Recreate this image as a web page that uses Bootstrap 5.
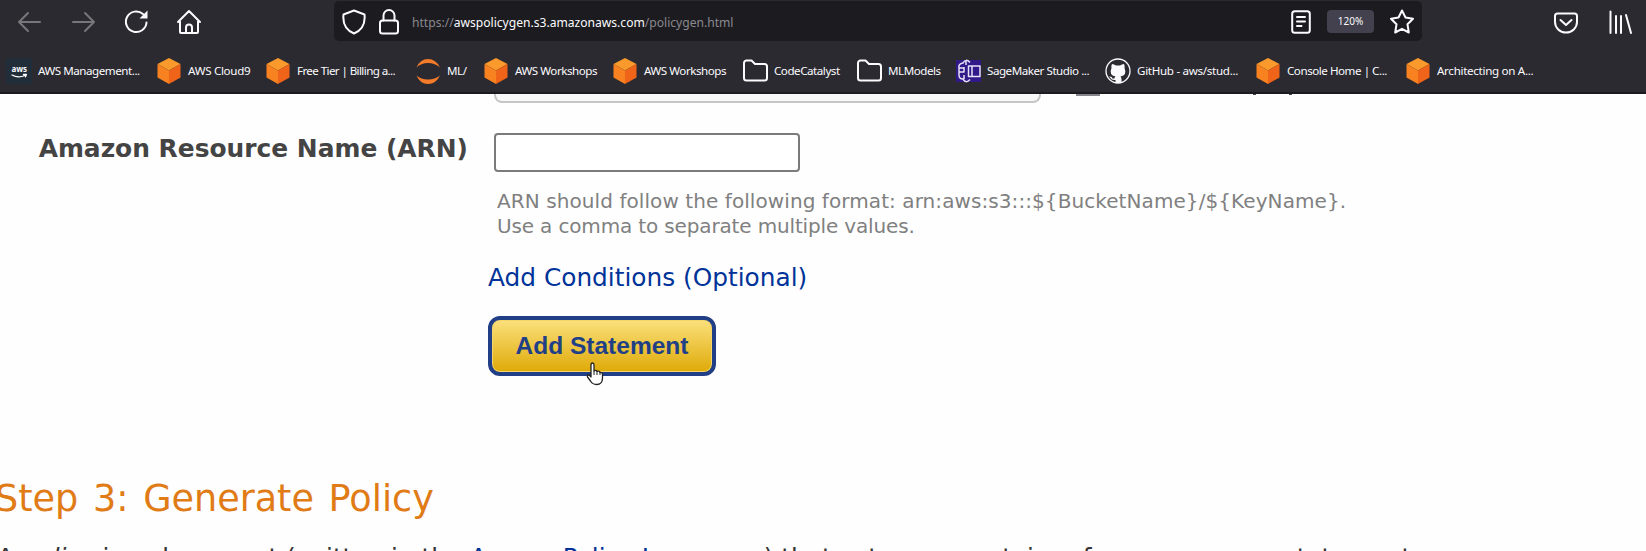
<!DOCTYPE html>
<html lang="en">
<head>
<meta charset="utf-8">
<meta name="viewport" content="width=device-width, initial-scale=1">
<title>AWS Policy Generator</title>
<link rel="stylesheet" href="https://cdn.jsdelivr.net/npm/bootstrap@5.3.0/dist/css/bootstrap.min.css">
<style>
body{height:551px;overflow:hidden;background:#fefefe;color:#444;font-family:"DejaVu Sans",Verdana,sans-serif}
svg{display:block;flex:none}
.chrome{height:94px;background:#2b2a31;border-bottom:2px solid #1b1b20;font-family:"Noto Sans","Segoe UI",sans-serif;color:#fbfbfe}
.toolbar{display:grid;grid-template-columns:334px 1088px 1fr;height:42px}
.line-icon{fill:none;stroke:#fbfbfe;stroke-width:2;stroke-linecap:round;stroke-linejoin:round}
.nav-icons{padding-left:17px;gap:27px;padding-top:1px}
.muted-icon{stroke:#77767b}
.urlbar{background:#1c1b20;border-radius:5px;height:40px;margin-top:1px;padding:1px 8px 0 8px}
.lock{margin-left:11px}
.url{font-size:12.1px;color:#8a898f;white-space:pre;margin-left:11px;padding-top:4px}
.url b{font-weight:400;color:#fbfbfe}
.zoomlvl{width:47px;height:23px;background:#42414d;border-radius:4px;font-size:10px}
.bookmarks{display:grid;grid-template-columns:150px 109px 150px 68px 129px 130px 114px 99px 150px 150px 150px 150px;padding-left:5.500px;height:50px;align-items:center;font-size:11.6px;letter-spacing:-.46px}
.bm{display:flex;align-items:center;gap:6.500px;white-space:nowrap;padding-top:8px;height:50px}
.bm svg{width:26px;height:26px}
.tight{letter-spacing:-.6px}
.wide{letter-spacing:-.3px}
.page{height:457px;overflow:hidden;position:relative}
.prev-row{height:10px;padding-left:494px}
.prev-select{width:547px;height:9px;border:2px solid #c6c6c6;border-top:0;border-radius:0 0 8px 8px;background:#f8f8f8}
.prev-check{width:24px;height:2px;margin-left:35px;background:#85848c}
.prev-text{margin-left:153px;gap:33px}
.prev-text i{width:3px;height:1px;background:#444}
.form-grid{display:grid;grid-template-columns:494px 1fr;margin-top:29px}
.field-name{font-weight:700;font-size:24.9px;line-height:32px;text-align:right;padding-right:26px;white-space:nowrap}
.arn{width:306px;height:39px;border:2px solid #7b7b7b;border-radius:4px;background:#fff;padding:0}
.hint{font-size:20px;line-height:25px;color:#808080;margin:17px 0 0 3px;white-space:nowrap;letter-spacing:.08px}
.hint-end{letter-spacing:-.15px}
.cond{font-size:24.8px;line-height:32px;color:#039;text-decoration:none;margin:23px 0 0 -6px;white-space:nowrap}
.add{width:228px;height:60px;margin:22px 0 0 -6px;border:4px solid #203f87;border-radius:12px;background:linear-gradient(#fbe07c,#dfaa08);color:#203f87;font:700 24.500px "Liberation Sans",Arial,sans-serif;padding:0 0 1px;box-shadow:inset 0 0 0 1px #f5d469}
.step{font-size:36.6px;word-spacing:3px;line-height:44px;color:#e07b16;margin:101px 0 0 -5px;font-weight:400;white-space:nowrap}
.para{font-size:24.75px;line-height:32px;color:#333;margin:21px 0 0 -3px;white-space:nowrap}
.para a{color:#039;text-decoration:none}
.pointer{position:absolute;left:586px;top:268px}
</style>
</head>
<body>
<svg width="0" height="0" class="position-absolute">
<defs>
<symbol id="cube" viewBox="0 0 26 26"><path fill="#fa9a2c" d="M13 0 24.500 6 13 12.500 1.500 6z"/><path fill="#f98220" d="M1.500 6 13 12.500V26L1.500 19.500z"/><path fill="#ef6418" d="M24.500 6 13 12.500V26l11.500-6.500z"/></symbol>
<symbol id="folder" viewBox="0 0 26 26"><path class="line-icon" d="M2 20V5a2.500 2.500 0 0 1 2.500-2.500h5L13 6h9.500A2.500 2.500 0 0 1 25 8.500V20a2.500 2.500 0 0 1-2.500 2.500h-18A2.500 2.500 0 0 1 2 20z"/></symbol>
</defs>
</svg>
<header class="chrome">
<div class="toolbar">
<div class="nav-icons d-flex align-items-center">
<svg class="line-icon muted-icon" width="26" height="26" viewBox="0 0 26 26"><path d="M23 13H2m9-9-9 9 9 9"/></svg>
<svg class="line-icon muted-icon" width="26" height="26" viewBox="0 0 26 26"><path d="M3 13h21m-9-9 9 9-9 9"/></svg>
<svg class="line-icon" width="26" height="26" viewBox="0 0 26 26"><path d="M23.500 13.500A10.300 10.300 0 1 1 20 5"/><path fill="#fbfbfe" stroke="none" d="M24.500 1.500v8h-8z"/></svg>
<svg class="line-icon" width="26" height="26" viewBox="0 0 26 26"><path d="M2 13 13 2l11 11M4 12v11q0 1 1 1h16q1 0 1-1V12M10 24v-5.500a3 3 0 0 1 6 0V24"/></svg>
</div>
<div class="urlbar d-flex align-items-center">
<svg class="line-icon" width="24" height="26" viewBox="0 0 24 26"><path d="M12 1.500 22.500 5.500q1.500 14-10.500 19Q0 19.500 1.500 5.500z"/></svg>
<svg class="line-icon lock" width="24" height="26" viewBox="0 0 24 26"><rect x="3" y="11.500" width="18" height="13" rx="2.500"/><path d="M6.500 11.500V6.500a5.500 5.500 0 0 1 11 0v5"/></svg>
<span class="url">https://<b>awspolicygen.s3.amazonaws.com</b>/policygen.html</span>
<svg class="line-icon ms-auto" width="20" height="24" viewBox="0 0 20 24"><rect x="1.200" y="1.200" width="17.600" height="21.600" rx="2.500"/><path d="M6 7h8M6 11.500h8M6 16h4.500"/></svg>
<span class="zoomlvl d-flex align-items-center justify-content-center ms-3 me-3">120%</span>
<svg class="line-icon" width="24" height="26" viewBox="1 0 24 26"><path d="m13 1.500 3.500 7 7.500 1.200-5.500 5.600 1.300 8.200-6.800-3.700-6.800 3.700 1.300-8.200L2 9.700l7.500-1.200z"/></svg>
</div>
<div class="d-flex align-items-center justify-content-end pt-1">
<svg class="line-icon" width="24" height="24" viewBox="0 0 24 24"><path d="M3.500 2.500h17Q23 2.500 23 5v6a11 10.500 0 0 1-22 0V5q0-2.500 2.500-2.500z"/><path d="m6.500 9 5.500 5 5.500-5"/></svg>
<svg class="line-icon ms-4 me-2 pe-1" width="36" height="26" viewBox="0 0 32 26"><path d="M5.500 1.500V23M11 6V23M16 6V23M21 5 26 23" transform="translate(3 0)"/></svg>
</div>
</div>
<nav class="bookmarks">
<span class="bm"><svg viewBox="0 0 26 26"><rect width="26" height="26" rx="2" fill="#222d3a"/><text x="5.500" y="14" font-size="8" font-weight="700" fill="#fbfbfe" textLength="15">aws</text><path class="line-icon" style="stroke-width:1.300" d="M6 17q6 3.500 13 .500M17.500 16.500l3-.200-1 2.500"/></svg><span>AWS Management...</span></span>
<span class="bm wide"><svg><use href="#cube"/></svg><span>AWS Cloud9</span></span>
<span class="bm tight"><svg><use href="#cube"/></svg><span>Free Tier | Billing a...</span></span>
<span class="bm"><svg viewBox="0 0 26 26"><path fill="#f47b2a" d="M1.500 9.500Q5 1 13 1t12 8.500Q20 5 13 5T1.500 9.500zM1.500 17.500Q6 21.500 13 21.500T25 17.500Q21 26 13 26T1.500 17.500z"/></svg><span>ML/</span></span>
<span class="bm"><svg><use href="#cube"/></svg><span>AWS Workshops</span></span>
<span class="bm"><svg><use href="#cube"/></svg><span>AWS Workshops</span></span>
<span class="bm"><svg><use href="#folder"/></svg><span>CodeCatalyst</span></span>
<span class="bm"><svg><use href="#folder"/></svg><span>MLModels</span></span>
<span class="bm"><svg viewBox="0 0 26 26"><rect x="1" y="2" width="25" height="22" fill="#31198a"/><g fill="none" stroke="#e4e0f5" stroke-width="1.500" stroke-linejoin="round"><path d="M15 4.500Q11 0 8 5 3 6 4 10v7q0 4 4 4 3 5 7 .500M4 10h5M4 14h5V9M9 17v4M11 2v5"/><path d="M13.500 8H25v10.500H13.500zM17 8v10.500"/></g></svg><span>SageMaker Studio ...</span></span>
<span class="bm wide"><svg viewBox="0 0 26 26"><circle cx="13" cy="13" r="12" fill="#2b2a31" stroke="#fbfbfe" stroke-width="1.300"/><path fill="#fbfbfe" d="M7 6q2 0 4 1.500h4Q17 6 19 6q1 2 .500 4 3 7-4 8.500 1 1 1 3V25h-6v-3q-4 .500-5-2l-1.500-1.500q3-.500 3.500 2h2q0-1.500 1-2-7-1.500-4-8.500Q6 8 7 6z"/></svg><span>GitHub - aws/stud...</span></span>
<span class="bm"><svg><use href="#cube"/></svg><span>Console Home | C...</span></span>
<span class="bm wide"><svg><use href="#cube"/></svg><span>Architecting on A...</span></span>
</nav>
</header>
<main class="page">
<div class="prev-row d-flex align-items-start"><div class="prev-select"></div><div class="prev-check"></div><div class="prev-text d-flex"><i></i><i></i></div></div>
<div class="form-grid">
<label class="field-name" for="arn">Amazon Resource Name (ARN)</label>
<div class="d-flex flex-column align-items-start">
<input class="arn" id="arn" type="text">
<div class="hint">ARN should follow the following format: arn:aws:s3:::${BucketName}/${KeyName}.<br><span class="hint-end">Use a comma to separate multiple values.</span></div>
<a class="cond" href="#">Add Conditions (Optional)</a>
<button class="add" type="button">Add Statement</button>
</div>
</div>
<h2 class="step">Step 3: Generate Policy</h2>
<p class="para">A <em>policy</em> is a document (written in the <a href="#">Access Policy Language</a>) that acts as a container for one or more statements.</p>
<svg class="pointer" width="20" height="24" viewBox="0 0 20 24"><path fill="#fff" stroke="#222" stroke-width="1.300" stroke-linejoin="round" d="M5 13V3q0-2 1.500-2T8 3v6q2.500-1.500 3 .500 2.500-1 3 1 2.500-.500 2.500 2V16q0 6.500-6 6.500-4 0-6-3.500L1.500 15q-.500-2 1-2T5 15z"/><path stroke="#222" d="M8 9v4M11 9.500V13M14 10.500V13"/></svg>
</main>
<script src="https://cdn.jsdelivr.net/npm/bootstrap@5.3.0/dist/js/bootstrap.bundle.min.js"></script>
</body>
</html>
